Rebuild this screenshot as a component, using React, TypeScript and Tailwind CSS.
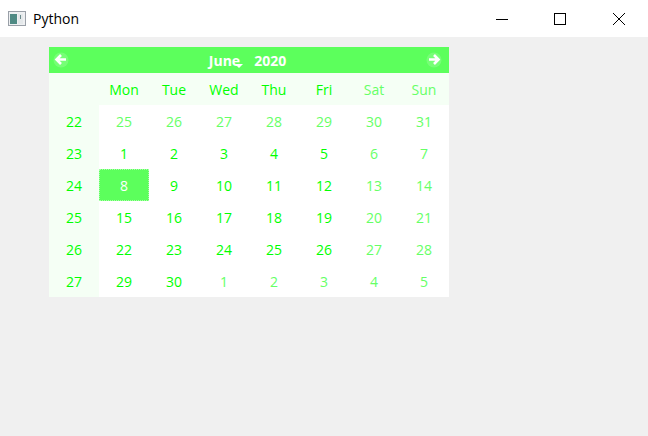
import React from 'react';

const dayNames = ['Mon', 'Tue', 'Wed', 'Thu', 'Fri', 'Sat', 'Sun'];

const weeks = [
  { num: 22, days: [25, 26, 27, 28, 29, 30, 31] },
  { num: 23, days: [1, 2, 3, 4, 5, 6, 7] },
  { num: 24, days: [8, 9, 10, 11, 12, 13, 14] },
  { num: 25, days: [15, 16, 17, 18, 19, 20, 21] },
  { num: 26, days: [22, 23, 24, 25, 26, 27, 28] },
  { num: 27, days: [29, 30, 1, 2, 3, 4, 5] },
];

const isFaded = (weekIdx: number, dayIdx: number) => {
  if (weekIdx === 0) return true;
  if (weekIdx === 5 && dayIdx >= 2) return true;
  return dayIdx >= 5;
};

const WinIcon = () => (
  <svg width="18" height="15" viewBox="0 0 18 15" className="shrink-0">
    <rect x="0.5" y="0.5" width="17" height="14" fill="#eef0f2" stroke="#9aa0a8" />
    <rect x="2" y="3" width="7" height="10" fill="#4f8a84" />
    <rect x="10" y="3" width="5" height="10" fill="#e4e8ea" />
    <rect x="12" y="4" width="1" height="4" fill="#6c8a8c" />
  </svg>
);

const NavArrow = ({ dir }: { dir: 'left' | 'right' }) => (
  <svg width="16" height="16" viewBox="0 0 16 16">
    <circle cx="8" cy="8" r="7.5" fill="#7dff7d" opacity="0.8" />
    {dir === 'left' ? (
      <path d="M8 3 L3.5 7.5 L8 12 M4 7.5 H13" stroke="#fff" strokeWidth="2.6" fill="none" />
    ) : (
      <path d="M8 3 L12.5 7.5 L8 12 M12 7.5 H3" stroke="#fff" strokeWidth="2.6" fill="none" />
    )}
  </svg>
);

export default function App() {
  return (
    <div className="w-[648px] h-[436px] bg-[#f0f0f0] flex flex-col overflow-hidden font-['Open_Sans','Noto_Sans',sans-serif]">
      {/* title bar */}
      <div className="h-[37px] bg-white flex items-center shrink-0">
        <div className="pl-2 flex items-center gap-[7px] flex-1">
          <WinIcon />
          <span className="text-[14px] text-black">Python</span>
        </div>
        <div className="flex items-center">
          <div className="w-[58px] flex justify-center">
            <svg width="12" height="12" viewBox="0 0 12 12">
              <path d="M0 6.5 H12" stroke="#000" />
            </svg>
          </div>
          <div className="w-[58px] mr-px flex justify-center">
            <svg width="12" height="12" viewBox="0 0 12 12">
              <rect x="0.5" y="0.5" width="11" height="11" fill="none" stroke="#000" />
            </svg>
          </div>
          <div className="w-[58px] flex justify-center">
            <svg width="12" height="12" viewBox="0 0 12 12">
              <path d="M0 0 L12 12 M12 0 L0 12" stroke="#000" />
            </svg>
          </div>
        </div>
      </div>

      {/* calendar */}
      <div className="ml-[49px] mt-[10px] w-[400px]">
        <div className="h-[26px] bg-[#5cff5c] flex items-center justify-between pl-1 pr-[7px]">
          <NavArrow dir="left" />
          <div className="relative flex gap-[14px] text-[14px] font-bold text-white">
            <span className="relative">
              June
              <span className="absolute right-[-3px] top-[14px] w-0 h-0 border-x-[4px] border-x-transparent border-t-[4px] border-t-white" />
            </span>
            <span>2020</span>
          </div>
          <NavArrow dir="right" />
        </div>

        <div className="grid grid-cols-8 auto-rows-[32px] bg-white text-[14px] leading-[34px] text-center">
          <div className="bg-[#f5fff5]" />
          {dayNames.map((name, i) => (
            <div key={name} className={`bg-[#f5fff5] ${i >= 5 ? 'text-[#66ff66]' : 'text-[#00ff00]'}`}>
              {name}
            </div>
          ))}
          {weeks.map((week, w) => (
            <React.Fragment key={week.num}>
              <div className="bg-[#f5fff5] text-[#00ff00]">{week.num}</div>
              {week.days.map((day, d) => {
                const selected = w === 2 && d === 0;
                let cls = isFaded(w, d) ? 'text-[#66ff66]' : 'text-[#00ff00]';
                if (selected) cls = 'bg-[#5cff5c] text-white border border-dotted border-[#a8ffa8] leading-[32px]';
                return (
                  <div key={d} className={cls}>
                    {day}
                  </div>
                );
              })}
            </React.Fragment>
          ))}
        </div>
      </div>
    </div>
  );
}
